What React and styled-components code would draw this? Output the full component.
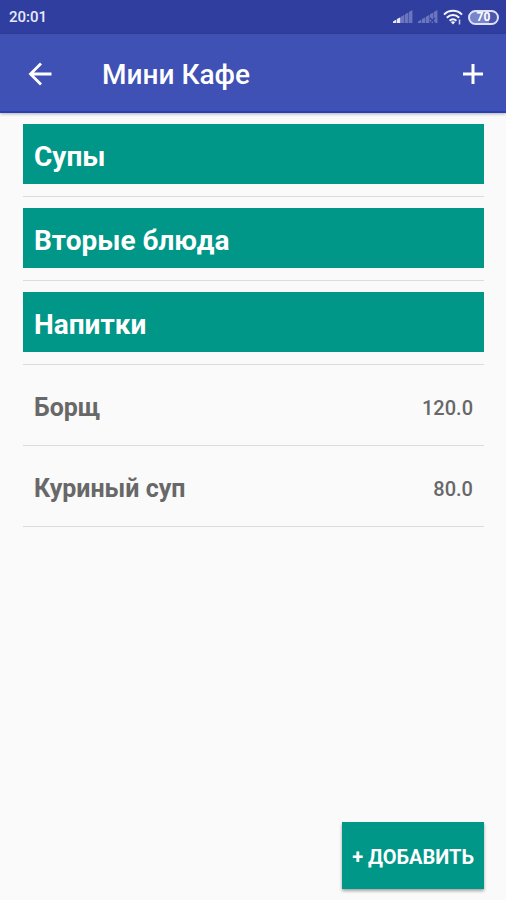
import React from "react";
import styled, { createGlobalStyle } from "styled-components";

const categories = ["Супы", "Вторые блюда", "Напитки"];

const dishes = [
  { name: "Борщ", price: "120.0" },
  { name: "Куриный суп", price: "80.0" },
];

const SignalIcon = ({ level, noSim }) => (
  <svg width="20" height="14" viewBox="0 0 20 14" aria-hidden="true">
    {[0, 1, 2, 3, 4].map((i) => (
      <path
        key={i}
        d={`M${i * 4} 13V${11.5 - i * 2.4}L${i * 4 + 3.4} ${9.6 - i * 2.4}V13z`}
        fill="#e8eafc"
        opacity={i < level ? 1 : 0.32}
      />
    ))}
    {noSim && (
      <path d="M12 8l5 5M17 8l-5 5" stroke="#303f9f" strokeWidth="1.2" />
    )}
  </svg>
);

const WifiIcon = () => (
  <svg width="20" height="16" viewBox="0 0 20 16" fill="none" aria-hidden="true">
    <g stroke="#f4f5ff" strokeWidth="2">
      <path d="M1 5.6C6 0.6 14 0.6 19 5.6" />
      <path d="M3.8 8.8C7.4 5.2 12.6 5.2 16.2 8.8" />
      <path d="M6.6 11.8C8.6 9.8 11.4 9.8 13.4 11.8" />
    </g>
    <path d="M7.8 13Q10 11.6 12.2 13L10 15.6z" fill="#f4f5ff" />
    <path d="M16.5 10.5v5" stroke="#c5cbf0" strokeWidth="1.6" />
  </svg>
);

const BackIcon = () => (
  <svg width="24" height="24" viewBox="0 0 24 24" fill="none" aria-hidden="true">
    <path d="M23.5 12H2.5M13 1.5L2.5 12L13 22.5" stroke="#ffffff" strokeWidth="2.8" />
  </svg>
);

const PlusIcon = () => (
  <svg width="22" height="22" viewBox="0 0 22 22" aria-hidden="true">
    <path d="M11 1v20M1 11h20" stroke="#ffffff" strokeWidth="3" />
  </svg>
);

const App = () => {
  return (
    <>
      <GlobalStyle />
      <Screen>
        <StatusBar>
          <span>20:01</span>
          <StatusIcons>
            <SignalIcon level={2} />
            <SignalIcon level={0} noSim />
            <WifiIcon />
            <Battery>70</Battery>
          </StatusIcons>
        </StatusBar>
        <Toolbar>
          <IconButton type="button" aria-label="Назад">
            <BackIcon />
          </IconButton>
          <Title>Мини Кафе</Title>
          <IconButton type="button" aria-label="Добавить категорию">
            <PlusIcon />
          </IconButton>
        </Toolbar>
        <Content>
          <List>
            {categories.map((category) => (
              <CategoryItem key={category}>
                <CategoryButton type="button">{category}</CategoryButton>
              </CategoryItem>
            ))}
            {dishes.map((dish) => (
              <DishItem key={dish.name}>
                <DishName>{dish.name}</DishName>
                <DishPrice>{dish.price}</DishPrice>
              </DishItem>
            ))}
          </List>
        </Content>
        <Footer>
          <AddButton type="button">+ ДОБАВИТЬ</AddButton>
        </Footer>
      </Screen>
    </>
  );
};

const GlobalStyle = createGlobalStyle`
  * {
    box-sizing: border-box;
  }

  body {
    margin: 0;
    background-color: #fafafa;
    font-family: Roboto, "Liberation Sans", sans-serif;
  }

  button {
    border: none;
    font-family: inherit;
    cursor: pointer;
  }
`;

const Screen = styled.div`
  display: flex;
  flex-direction: column;
  min-height: 100vh;
`;

const StatusBar = styled.div`
  display: flex;
  align-items: center;
  justify-content: space-between;
  height: 34px;
  padding: 0 7px 0 9px;
  background-color: #303f9f;
  color: #e8eafc;
  font-size: 15px;
  font-weight: 500;
`;

const StatusIcons = styled.div`
  display: flex;
  align-items: center;
  gap: 5px;
`;

const Battery = styled.span`
  display: flex;
  align-items: center;
  justify-content: center;
  width: 31px;
  height: 15px;
  border: 2px solid #dfe2f8;
  border-radius: 8px;
  background: linear-gradient(to right, #7884cb 70%, #4a57ad 70%);
  color: #ffffff;
  font-size: 12px;
  font-weight: 700;
  line-height: 12px;
`;

const Toolbar = styled.header`
  display: flex;
  align-items: center;
  height: 79px;
  padding: 2px 22px 0 28px;
  border-bottom: 2px solid #2840b4;
  background-color: #3f51b5;
  box-shadow: 0 1px 3px rgba(0, 0, 0, 0.3);
`;

const IconButton = styled.button`
  display: flex;
  padding: 0;
  background: none;
`;

const Title = styled.h1`
  flex: 1;
  margin: 0 0 0 50px;
  padding-top: 2px;
  color: #ffffff;
  font-size: 28px;
  font-weight: 500;
`;

const Content = styled.main`
  flex: 1;
  padding: 0 22px 0 23px;
`;

const List = styled.ul`
  margin: 0;
  padding: 0;
  list-style: none;
`;

const CategoryItem = styled.li`
  padding: 11px 0 12px;
  border-bottom: 1px solid #dcdcdc;
`;

const CategoryButton = styled.button`
  display: block;
  width: 100%;
  height: 60px;
  padding: 4px 11px 0;
  background-color: #009688;
  color: #ffffff;
  font-size: 28px;
  font-weight: 700;
  text-align: left;
`;

const DishItem = styled.li`
  display: flex;
  align-items: center;
  justify-content: space-between;
  height: 81px;
  padding: 4px 11px 0;
  border-bottom: 1px solid #dcdcdc;
  color: #686868;
`;

const DishName = styled.span`
  font-size: 25px;
  font-weight: 700;
`;

const DishPrice = styled.span`
  padding-top: 2px;
  font-size: 20px;
  font-weight: 500;
`;

const Footer = styled.footer`
  display: flex;
  justify-content: flex-end;
  padding: 11px 22px;
`;

const AddButton = styled.button`
  height: 67px;
  padding: 2px 10px 0;
  background-color: #009688;
  box-shadow: 0 2px 3px rgba(0, 0, 0, 0.35);
  color: #ffffff;
  font-size: 20px;
  font-weight: 700;
`;

export default App;
